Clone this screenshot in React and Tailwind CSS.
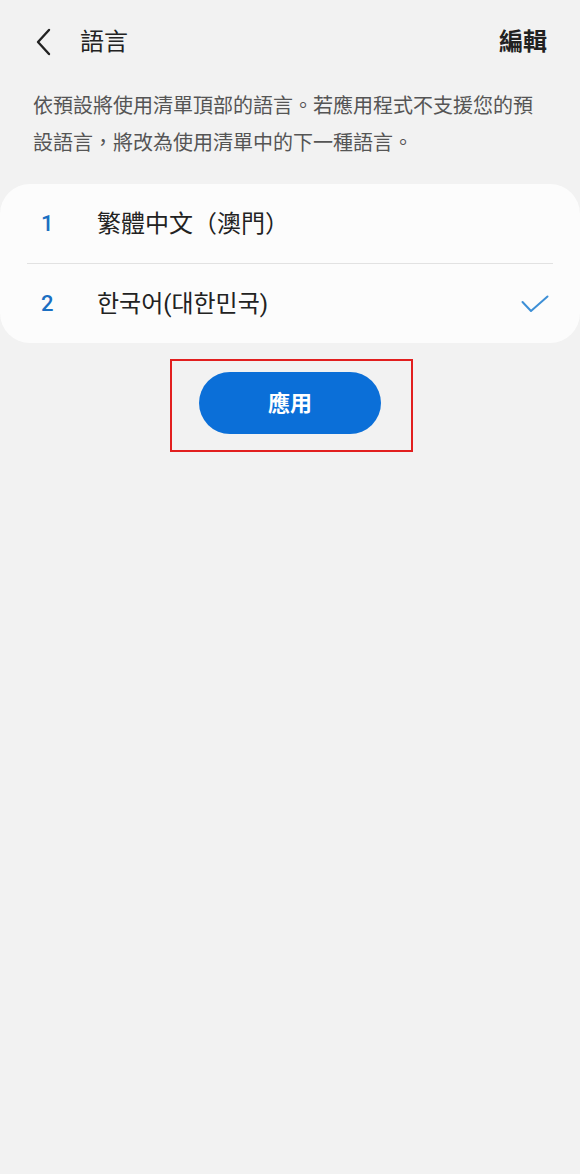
export default function App() {
  const font = { fontFamily: '"Roboto", "Noto Sans CJK TC", sans-serif' }
  return (
    <div className="min-h-[1174px] w-full bg-[#f2f2f2]" style={font}>
      {/* header */}
      <div className="flex h-[84px] items-center pl-[35px] pr-[33px]">
        <svg width="18" height="28" viewBox="0 0 18 28" fill="none" className="mr-[27px]">
          <path d="M14 2 L3 14 L14 26" stroke="#222" strokeWidth="2.4" strokeLinecap="round" strokeLinejoin="round" />
        </svg>
        <span className="text-[24px] text-[#222]">語言</span>
        <span className="ml-auto text-[24px] font-bold text-[#222]">編輯</span>
      </div>

      <p className="px-[33px] pt-[4px] text-[20px] leading-[37px] text-[#555]">
        依預設將使用清單頂部的語言。若應用程式不支援您的預
        <br />
        設語言，將改為使用清單中的下一種語言。
      </p>

      <div className="mt-[22px] rounded-[30px] bg-[#fcfcfc]">
        <div className="flex h-[79px] items-center pl-[41px]">
          <span className="w-[56px] text-[22px] font-medium text-[#1b6fc2]">1</span>
          <span className="text-[24px] text-[#222]">繁體中文（澳門）</span>
        </div>
        <div className="mx-[27px] h-px bg-[#e2e2e2]" />
        <div className="flex h-[79px] items-center pl-[41px] pr-[31px]">
          <span className="w-[56px] text-[22px] font-medium text-[#1b6fc2]">2</span>
          <span className="text-[24px] text-[#222]">한국어(대한민국)</span>
          <svg width="28" height="18" viewBox="0 0 28 18" fill="none" className="ml-auto">
            <path d="M1.5 7 L10 16 L26.5 1.5" stroke="#3d8fd6" strokeWidth="2" strokeLinecap="round" strokeLinejoin="round" />
          </svg>
        </div>
      </div>

      <div className="ml-[170px] mt-[16px] h-[93px] w-[243px] border-2 border-[#e21f1f] pl-[27px] pt-[11px]">
        <button className="flex h-[62px] w-[182px] items-center justify-center rounded-full bg-[#0b6fd8] text-[22px] font-bold text-white">
          應用
        </button>
      </div>
    </div>
  )
}
